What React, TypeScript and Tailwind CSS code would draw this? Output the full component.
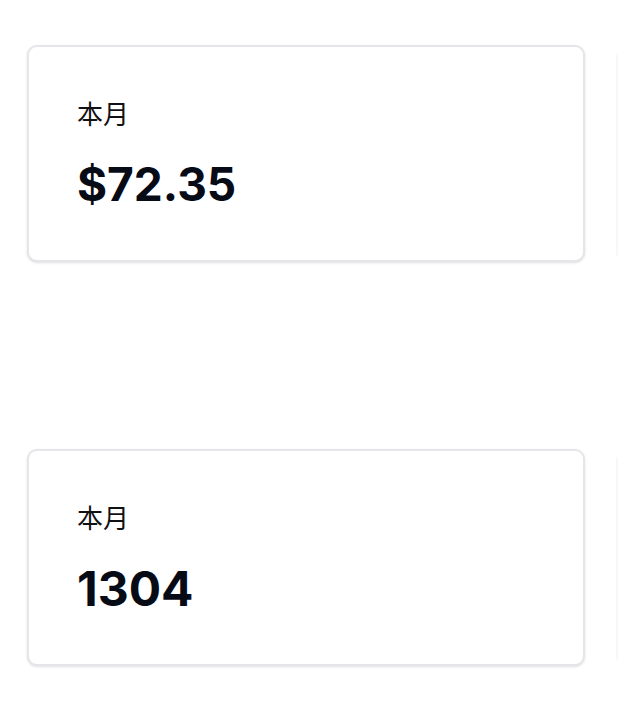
import React from "react";

type Stat = { label: string; value: string; size: string };

const rows: Stat[] = [
  { label: "本月", value: "$72.35", size: "text-[46px]" },
  { label: "本月", value: "1304", size: "text-[48px]" },
];

function StatCard({ stat }: { stat: Stat }) {
  return (
    <div className="w-[558px] h-[217px] shrink-0 rounded-[10px] border-2 border-[#e6e6ea] bg-white shadow-sm pl-12 pt-[52px]">
      <p className="text-[26px] leading-8 text-[#111114]">{stat.label}</p>
      <p className={`${stat.size} leading-none font-bold text-[#070b16] mt-[30px]`}>
        {stat.value}
      </p>
    </div>
  );
}

export default function App() {
  return (
    <div
      className="min-h-screen w-full overflow-hidden bg-white pl-[27px] pt-[45px]"
      style={{ fontFamily: '"Inter", "Noto Sans CJK SC", sans-serif' }}
    >
      <div className="flex flex-col gap-[187px]">
        {rows.map((stat, i) => (
          <div key={i} className="flex gap-[31px]">
            <StatCard stat={stat} />
            <div className="w-[558px] h-[214px] mt-[3px] shrink-0 rounded-[10px] border-2 border-[#f7f7f8]" />
          </div>
        ))}
      </div>
    </div>
  );
}
